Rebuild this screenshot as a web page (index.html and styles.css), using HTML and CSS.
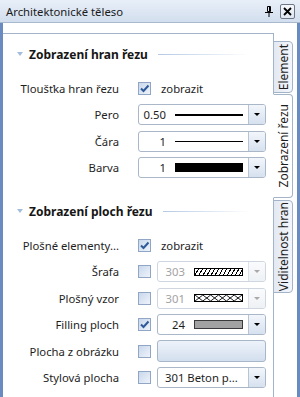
FILE: index.html
```html
<!DOCTYPE html>
<html lang="cs">
<head>
<meta charset="utf-8">
<link rel="stylesheet" href="styles.css">
</head>
<body>
<div class="window">
  <header class="titlebar">
    <span class="title">Architektonické těleso</span>
    <span class="pin"><svg width="8" height="11" viewBox="0 0 8 11"><path d="M2.5 0.5h3v5h-3z" fill="none" stroke="#000" stroke-width="1"/><path d="M4.5 1v4.5" stroke="#000" stroke-width="1"/><path d="M0 6.5h8" stroke="#000" stroke-width="1"/><path d="M4 7v4" stroke="#000" stroke-width="1"/></svg></span>
    <span class="close"><svg width="9" height="9" viewBox="0 0 9 9"><path d="M1 1L8 8M8 1L1 8" stroke="#000" stroke-width="1.8"/></svg></span>
  </header>
  <div class="body">
    <main class="panel">
      <h2 class="heading"><span class="tri"></span><span class="htext">Zobrazení hran řezu</span><span class="hline"></span></h2>
      <div class="row">
        <span class="lbl">Tloušťka hran řezu</span>
        <div class="ctl"><span class="cb"><svg width="11" height="11" viewBox="0 0 11 11"><path d="M2 5.5L4.5 8L9.5 2.5" fill="none" stroke="#2e5a9a" stroke-width="2"/></svg></span><span class="cbtext">zobrazit</span></div>
      </div>
      <div class="row">
        <span class="lbl">Pero</span>
        <div class="ctl"><div class="combo"><span class="val">0.50</span><span class="swatch line-thick"></span><span class="btn"><i class="arrow"></i></span></div></div>
      </div>
      <div class="row">
        <span class="lbl">Čára</span>
        <div class="ctl"><div class="combo"><span class="val">1</span><span class="swatch line-thin"></span><span class="btn"><i class="arrow"></i></span></div></div>
      </div>
      <div class="row">
        <span class="lbl">Barva</span>
        <div class="ctl"><div class="combo"><span class="val">1</span><span class="swatch solid"></span><span class="btn"><i class="arrow"></i></span></div></div>
      </div>

      <h2 class="heading heading-second"><span class="tri"></span><span class="htext">Zobrazení ploch řezu</span><span class="hline"></span></h2>
      <div class="row">
        <span class="lbl">Plošné elementy...</span>
        <div class="ctl"><span class="cb"><svg width="11" height="11" viewBox="0 0 11 11"><path d="M2 5.5L4.5 8L9.5 2.5" fill="none" stroke="#2e5a9a" stroke-width="2"/></svg></span><span class="cbtext">zobrazit</span></div>
      </div>
      <div class="row">
        <span class="lbl">Šrafa</span>
        <div class="ctl"><span class="cb"></span><div class="combo disabled"><span class="val">303</span><span class="swatch hatch"></span><span class="btn"><i class="arrow"></i></span></div></div>
      </div>
      <div class="row">
        <span class="lbl">Plošný vzor</span>
        <div class="ctl"><span class="cb"></span><div class="combo disabled"><span class="val">301</span><span class="swatch pattern"><svg width="48" height="6" viewBox="0 0 48 6" preserveAspectRatio="none"><path d="M0 0L8 6L16 0L24 6L32 0L40 6L48 0" fill="none" stroke="#000" stroke-width="0.9"/><path d="M0 6L8 0L16 6L24 0L32 6L40 0L48 6" fill="none" stroke="#000" stroke-width="0.9"/></svg></span><span class="btn"><i class="arrow"></i></span></div></div>
      </div>
      <div class="row">
        <span class="lbl">Filling ploch</span>
        <div class="ctl"><span class="cb"><svg width="11" height="11" viewBox="0 0 11 11"><path d="M2 5.5L4.5 8L9.5 2.5" fill="none" stroke="#2e5a9a" stroke-width="2"/></svg></span><div class="combo"><span class="val">24</span><span class="swatch gray"></span><span class="btn"><i class="arrow"></i></span></div></div>
      </div>
      <div class="row">
        <span class="lbl">Plocha z obrázku</span>
        <div class="ctl"><span class="cb"></span><span class="pushbtn"></span></div>
      </div>
      <div class="row">
        <span class="lbl">Stylová plocha</span>
        <div class="ctl"><span class="cb"></span><div class="combo"><span class="txt">301 Beton p...</span><span class="btn"><i class="arrow"></i></span></div></div>
      </div>
    </main>
    <nav class="tabs">
      <div class="tab tab-element"><span class="tabtext">Element</span></div>
      <div class="tab tab-active"><span class="tabtext">Zobrazení řezu</span></div>
      <div class="tab tab-visibility"><span class="tabtext">Viditelnost hran</span></div>
    </nav>
  </div>
</div>
</body>
</html>
```

FILE: styles.css
```css
* { box-sizing: border-box; }
html, body { margin: 0; padding: 0; background: #fff; }
body {
  font-family: "Noto Sans", "Open Sans", sans-serif;
  font-size: 11.3px;
  color: #1e1e1e;
}
.window {
  width: 300px;
  height: 397px;
  overflow: hidden;
  display: flex;
  flex-direction: column;
  background: #fff;
}
.titlebar {
  height: 23px;
  flex: none;
  border-bottom: 1px solid #a7b8cf;
  background: linear-gradient(#e8eff8, #d2deee);
  display: flex;
  align-items: center;
  padding: 0 5px 0 6px;
}
.title { flex: 1; font-size: 11.3px; color: #1a1a1a; }
.pin { display: flex; width: 8px; height: 11px; margin-right: 7px; }
.close {
  width: 15px;
  height: 15px;
  border: 1px solid #6e7787;
  border-radius: 2px;
  background: linear-gradient(#f6f8fb, #dfe6f0);
  display: flex;
  align-items: center;
  justify-content: center;
}
.body {
  flex: 1;
  min-height: 0;
  display: flex;
  border-left: 3px solid #6a8bbf;
  border-right: 3px solid #6a8bbf;
  padding-top: 10px;
}
.panel {
  width: 271px;
  flex: none;
  border-top: 1px solid #a3b3c9;
  border-right: 1px solid #a3b3c9;
  padding-right: 7px;
}
.heading {
  margin: 10px 0 11px;
  height: 20px;
  display: flex;
  align-items: center;
  padding-left: 14px;
  font-size: 12px;
  font-weight: bold;
  color: #161616;
}
.heading-second { margin-top: 20px; }
.tri {
  width: 0;
  height: 0;
  border-left: 3px solid transparent;
  border-right: 3px solid transparent;
  border-top: 4px solid #a3bddc;
  margin-right: 6px;
}
.hline {
  flex: 1;
  height: 1px;
  margin: 0 16px 0 10px;
  background: linear-gradient(to right, #b4c9e4, rgba(255,255,255,0));
}
.row {
  height: 26.5px;
  display: grid;
  grid-template-columns: 116px 1fr;
  column-gap: 19px;
  align-items: center;
}
.lbl { text-align: right; white-space: nowrap; }
.ctl { display: flex; align-items: center; min-width: 0; }
.cb {
  flex: none;
  width: 13px;
  height: 13px;
  border: 1px solid #91a6c4;
  background: linear-gradient(135deg, #c9d8ec, #eef3fa);
  display: flex;
  align-items: center;
  justify-content: center;
  margin-right: 6px;
}
.cbtext { margin-left: 4px; }
.combo {
  flex: 1;
  height: 21px;
  border: 1px solid #aab7c9;
  border-radius: 3px;
  background: #fff;
  display: flex;
  align-items: center;
  min-width: 0;
}
.val {
  flex: none;
  width: 27px;
  text-align: right;
  margin-right: 9px;
}
.txt { flex: 1; padding-left: 7px; white-space: nowrap; overflow: hidden; }
.swatch { flex: 1; margin-right: 5px; }
.line-thick { height: 2px; background: #000; }
.line-thin { height: 1px; background: #000; }
.solid { height: 9px; background: #000; }
.hatch {
  height: 8px;
  border: 1px solid #000;
  background: repeating-linear-gradient(120deg, #fff 0 2.5px, #000 2.5px 3.5px);
}
.pattern {
  height: 8px;
  border: 1px solid #000;
  display: flex;
}
.pattern svg { width: 100%; height: 100%; }
.gray { height: 9px; background: #a2a2a2; border: 1px solid #3a3a3a; }
.btn {
  flex: none;
  width: 17px;
  align-self: stretch;
  border-left: 1px solid #b9c4d3;
  border-radius: 0 2px 2px 0;
  background: linear-gradient(#f3f6fb, #d6e1ef);
  display: flex;
  align-items: center;
  justify-content: center;
}
.arrow {
  width: 0;
  height: 0;
  border-left: 3px solid transparent;
  border-right: 3px solid transparent;
  border-top: 3px solid #000;
}
.disabled { border-color: #cfd6e0; color: #a3a3a3; }
.disabled .btn { border-left-color: #dde2e9; background: linear-gradient(#fafbfd, #eef1f5); }
.disabled .arrow { border-top-color: #a8a8a8; }
.pushbtn {
  flex: 1;
  height: 22px;
  border: 1px solid #a8b6ca;
  border-radius: 3px;
  background: linear-gradient(#eef3fa, #d3dfee);
}
.tabs {
  flex: none;
  width: 21px;
  margin-left: -1px;
  padding-top: 8px;
  display: flex;
  flex-direction: column;
  gap: 1px;
  position: relative;
  z-index: 1;
}
.tab {
  width: 20px;
  border: 1px solid #a3b3c9;
  border-radius: 0 4px 4px 0;
  background: linear-gradient(to right, #e3e9f2, #f4f6fa);
  display: flex;
  align-items: center;
  justify-content: center;
}
.tab-element { height: 52px; }
.tab-active { height: 104px; background: #fff; border-left-color: #fff; }
.tab-visibility { height: 93px; margin-top: 1px; }
.tabtext {
  writing-mode: vertical-rl;
  transform: rotate(180deg);
  font-size: 12px;
  white-space: nowrap;
  color: #1e1e1e;
}
```
